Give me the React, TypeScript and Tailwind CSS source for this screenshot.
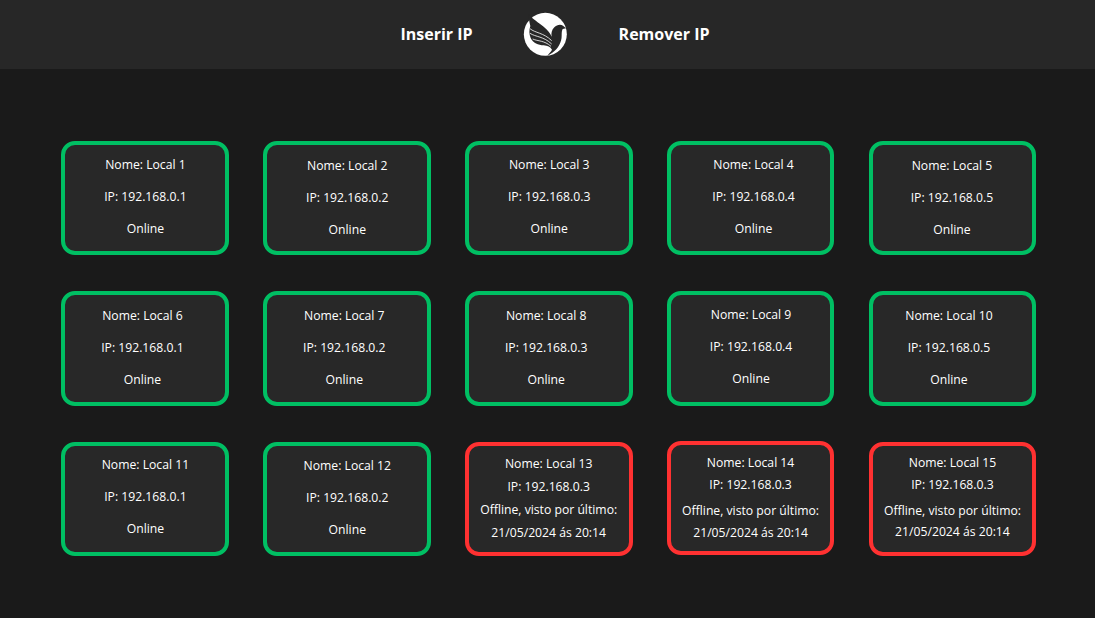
type Card = { n: string; ip: string; cls: string };

const online: Card[] = [
  { n: "Local 1", ip: "192.168.0.1", cls: "pt-[12px] pl-[1px]" },
  { n: "Local 2", ip: "192.168.0.2", cls: "pt-[13px] pl-[1px]" },
  { n: "Local 3", ip: "192.168.0.3", cls: "pt-[12px] pl-[1px]" },
  { n: "Local 4", ip: "192.168.0.4", cls: "pt-[12px] pl-[6px]" },
  { n: "Local 5", ip: "192.168.0.5", cls: "pt-[13px] pr-[1px]" },
  { n: "Local 6", ip: "192.168.0.1", cls: "pt-[12.5px] pr-[5px]" },
  { n: "Local 7", ip: "192.168.0.2", cls: "pt-[12.5px] pr-[5px]" },
  { n: "Local 8", ip: "192.168.0.3", cls: "pt-[12.5px] pr-[5px]" },
  { n: "Local 9", ip: "192.168.0.4", cls: "pt-[12px] pl-[1px]" },
  { n: "Local 10", ip: "192.168.0.5", cls: "pt-[12.5px] pr-[7px]" },
  { n: "Local 11", ip: "192.168.0.1", cls: "pt-[11px] pl-[1px]" },
  { n: "Local 12", ip: "192.168.0.2", cls: "pt-[12px] pl-[1px]" },
];

const offline = [
  { n: "Local 13", outer: "", pad: "pt-[10px]", a: "mt-[7px]", b: "mt-[7px]", c: "mt-[7px]" },
  { n: "Local 14", outer: "-mt-px", pad: "pt-[10px]", a: "mt-[6px]", b: "mt-[10px]", c: "mt-[6px]" },
  { n: "Local 15", outer: "", pad: "pt-[9px]", a: "mt-[6px]", b: "mt-[10px]", c: "mt-[5px]" },
];

function Logo() {
  return (
    <svg width="44" height="46" viewBox="430 34 132 138" className="shrink-0">
      <circle cx="497" cy="101" r="64.5" fill="#fff" />
      <path
        d="M447 40 C456 54 478 66 492 78 C504 88 512 98 516 108 C514 98 516 88 524 80 C531 72 543 70 550 75 L559 83 L549 85 C546 90 546 98 546 106 C546 124 536 144 518 156 L503 166 C509 157 514 153 517 147 C512 139 504 135 492 134 C476 133 460 127 453 112 C448 100 448 88 452 76 C449 64 447 52 447 40 Z"
        fill="#272727"
      />
      <path
        d="M451 84 C466 97 492 96 516 120 M451 98 C468 109 492 107 516 130 M459 115 C475 122 494 119 514 137"
        stroke="#fff"
        strokeWidth="2.4"
        fill="none"
      />
    </svg>
  );
}

export default function App() {
  return (
    <div className="min-h-[618px] bg-[#1a1a1a] text-white font-['Open_Sans','Noto_Sans',sans-serif]">
      <header className="h-[69px] bg-[#272727] flex items-center justify-center gap-[50px] pl-[15px] text-[16px] font-bold">
        <span className="pb-[2px]">Inserir IP</span>
        <Logo />
        <span className="pb-[2px] ml-[2px]">Remover IP</span>
      </header>
      <main className="grid grid-cols-[repeat(5,167.8px)] gap-x-[34.1px] gap-y-[36px] pl-[61px] pt-[72px] text-[12.2px] leading-[16px]">
        {online.map((c) => (
          <div key={c.n} className="h-[114.33px] rounded-[14px] border-4 border-[#00bf63] bg-[#282828]">
            <div className={"flex flex-col items-center gap-[16px] " + c.cls}>
              <p>Nome: {c.n}</p>
              <p>IP: {c.ip}</p>
              <p>Online</p>
            </div>
          </div>
        ))}
        {offline.map((c) => (
          <div key={c.n} className={"h-[114.33px] rounded-[14px] border-4 border-[#ff3131] bg-[#282828] flex flex-col items-center " + c.pad + " " + c.outer}>
            <p>Nome: {c.n}</p>
            <p className={c.a}>IP: 192.168.0.3</p>
            <p className={c.b}>Offline, visto por último:</p>
            <p className={c.c}>21/05/2024 ás 20:14</p>
          </div>
        ))}
      </main>
    </div>
  );
}
